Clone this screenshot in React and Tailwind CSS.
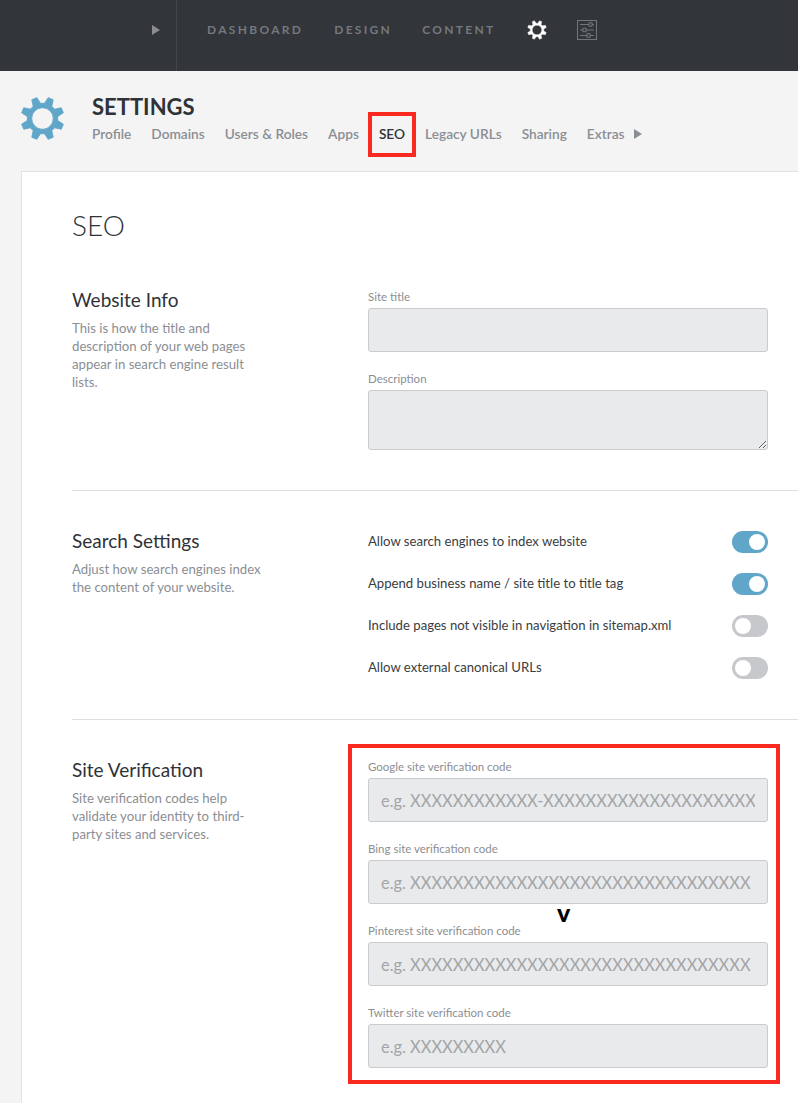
import React from "react";

const font = { fontFamily: "Lato, 'Open Sans', sans-serif" };

// cog outline, teeth are worked out from the count so both gears share it
function gearPath(teeth, outer, root, hole) {
  const pts = [];
  const step = (Math.PI * 2) / teeth;
  for (let i = 0; i < teeth; i++) {
    const a = i * step + step / 2 - Math.PI / 2;
    const w = step * 0.16;
    const g = step * 0.33;
    pts.push([a - g, root], [a - w, outer], [a + w, outer], [a + g, root]);
  }
  const d = pts
    .map(([a, r], i) => `${i ? "L" : "M"}${(50 + r * Math.cos(a)).toFixed(2)} ${(50 + r * Math.sin(a)).toFixed(2)}`)
    .join(" ");
  return `${d} Z M${50 - hole} 50 a${hole} ${hole} 0 1 0 ${hole * 2} 0 a${hole} ${hole} 0 1 0 ${-hole * 2} 0 Z`;
}

const Gear = ({ className }) => (
  <svg viewBox="0 0 100 100" className={className} fill="currentColor" stroke="currentColor" strokeWidth="2" strokeLinejoin="round">
    <path fillRule="evenodd" d={gearPath(8, 48, 34, 24)} />
  </svg>
);

const SlidersIcon = () => (
  <svg viewBox="0 0 20 20" className="h-5 w-5 text-[#73767b]" fill="none" stroke="currentColor" strokeWidth="1">
    <rect x="0.5" y="0.5" width="19" height="19" />
    <path d="M3 4.5h9M15 4.5h2M3 10h3M9 10h8M3 15.5h7M13 15.5h4" />
    <rect x="12" y="2.8" width="3" height="3.4" />
    <rect x="6" y="8.3" width="3" height="3.4" />
    <rect x="10" y="13.8" width="3" height="3.4" />
  </svg>
);

const Toggle = ({ on }) => (
  <div className={`flex h-[22px] w-9 items-center rounded-full px-[3px] ${on ? "justify-end bg-[#5fa6c9]" : "justify-start bg-[#c6c8cc]"}`}>
    <div className="h-4 w-4 rounded-full bg-white" />
  </div>
);

const Field = ({ label, placeholder, area }) => (
  <div className="flex flex-col">
    <label className="mb-[3px] text-[11.5px] leading-[16px] text-[#8b8e93]">{label}</label>
    {area ? (
      <textarea className="block h-[60px] w-full rounded-[3px] border border-[#c9cbce] bg-[#e9eaec] outline-none" />
    ) : (
      <input
        placeholder={placeholder}
        className="h-11 w-full rounded-[3px] border border-[#c9cbce] bg-[#e9eaec] px-3 text-[16.4px] outline-none placeholder:text-[#a3a5a8]"
      />
    )}
  </div>
);

const Section = ({ title, text, children, className, textWidth = "w-[192px]" }) => (
  <div className={`flex border-b border-[#dedede] pr-[30px] ${className}`}>
    <div className="w-[296px] shrink-0">
      <h2 className="text-[19px] leading-[22px] text-[#2f3237]">{title}</h2>
      <p className={`mt-[8px] text-[13.2px] leading-[18px] text-[#8b8e93] ${textWidth}`}>{text}</p>
    </div>
    <div className="min-w-0 flex-1">{children}</div>
  </div>
);

const tabs = ["Profile", "Domains", "Users & Roles", "Apps", "SEO", "Legacy URLs", "Sharing", "Extras"];

const switches = [
  ["Allow search engines to index website", true],
  ["Append business name / site title to title tag", true],
  ["Include pages not visible in navigation in sitemap.xml", false],
  ["Allow external canonical URLs", false],
];

const App = () => {
  return (
    <div style={font} className="relative h-[1103px] w-[798px] overflow-hidden bg-[#f4f4f4]">
      {/* top bar */}
      <div className="flex h-[71px] items-stretch bg-[#32353a]">
        <div className="flex w-[177px] items-center justify-end border-r border-[#43464b] pr-4 pb-[11px]">
          <div className="h-0 w-0 border-y-[5px] border-l-[8px] border-y-transparent border-l-[#8a8c90]" />
        </div>
        <div className="flex items-center pb-[11px] pl-[30px] text-[12px] font-bold tracking-[2.3px] text-[#75787d]">
          <span>DASHBOARD</span>
          <span className="ml-[31px]">DESIGN</span>
          <span className="ml-[30px]">CONTENT</span>
          <Gear className="ml-[31px] h-5 w-5 text-white" />
          <div className="ml-[30px]">
            <SlidersIcon />
          </div>
        </div>
      </div>

      {/* settings header */}
      <div className="flex h-[100px] pt-[24px] pl-5">
        <Gear className="mt-[1px] h-[45px] w-[45px] text-[#5fa6c9]" />
        <div className="ml-[27px]">
          <h1 className="text-[22px] leading-[24px] font-bold text-[#2f3237]">SETTINGS</h1>
          <div className="mt-[5px] flex items-center gap-5 text-[13.7px] leading-[20px] font-semibold text-[#8b8e93]">
            {tabs.map((tab) => (
              <span key={tab} className={tab === "SEO" ? "relative text-[#2f3237]" : ""}>
                {tab}
                {tab === "SEO" && (
                  <span className="absolute -top-[12px] -left-[11px] h-[45px] w-[48px] border-[4px] border-[#fb2a20]" />
                )}
              </span>
            ))}
            <div className="-ml-[11px] h-0 w-0 border-y-[5px] border-l-[8px] border-y-transparent border-l-[#8b8e93]" />
          </div>
        </div>
      </div>

      {/* card */}
      <div className="ml-[21px] h-[932px] border-t border-l border-[#e2e2e2] bg-white pl-[50px]">
        <h1 className="pt-[35px] text-[28px] leading-[36px] font-light text-[#2f3237]">SEO</h1>

        <Section
          className="mt-[46px] pb-[40px]"
          title="Website Info"
          text="This is how the title and description of your web pages appear in search engine result lists."
        >
          <div className="flex flex-col gap-[19px]">
            <Field label="Site title" />
            <Field label="Description" area />
          </div>
        </Section>

        <Section
          className="pt-[39px] pb-[40px]"
          title="Search Settings"
          text="Adjust how search engines index the content of your website."
        >
          <div className="mt-[1px] flex flex-col gap-5">
            {switches.map(([label, on]) => (
              <div key={label} className="flex items-center justify-between text-[13.15px] text-[#3a3d42]">
                <span>{label}</span>
                <Toggle on={on} />
              </div>
            ))}
          </div>
        </Section>

        <div className="flex pt-[39px] pr-[30px]">
          <div className="w-[296px] shrink-0">
            <h2 className="text-[19px] leading-[22px] text-[#2f3237]">Site Verification</h2>
            <p className="mt-[8px] w-[180px] text-[13.2px] leading-[18px] text-[#8b8e93]">
              Site verification codes help validate your identity to third-party sites and services.
            </p>
          </div>
          <div className="flex min-w-0 flex-1 flex-col gap-[19px]">
            <Field label="Google site verification code" placeholder="e.g. XXXXXXXXXXXX-XXXXXXXXXXXXXXXXXXXX" />
            <Field label="Bing site verification code" placeholder="e.g. XXXXXXXXXXXXXXXXXXXXXXXXXXXXXXXX" />
            <Field label="Pinterest site verification code" placeholder="e.g. XXXXXXXXXXXXXXXXXXXXXXXXXXXXXXXX" />
            <Field label="Twitter site verification code" placeholder="e.g. XXXXXXXXX" />
          </div>
        </div>
      </div>

      {/* annotation drawn over the page */}
      <div className="absolute top-[744px] left-[348px] h-[340px] w-[432px] border-[4px] border-[#fb2a20]" />
      <span className="absolute top-[897px] left-[557px] text-[25px] leading-[30px] font-black text-black">v</span>
    </div>
  );
};

export default App;
